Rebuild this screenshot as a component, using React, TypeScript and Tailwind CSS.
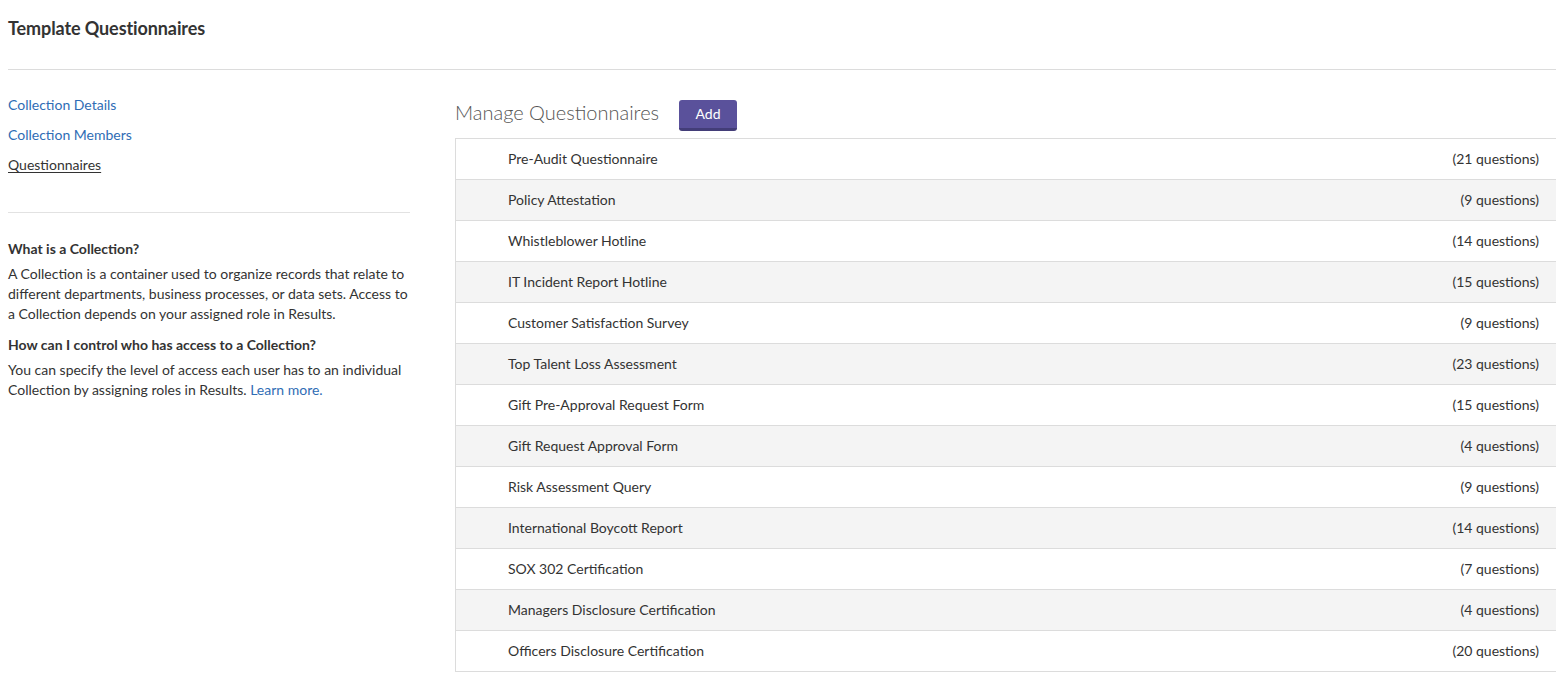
import React from "react";

const questionnaires: { name: string; count: number }[] = [
  { name: "Pre-Audit Questionnaire", count: 21 },
  { name: "Policy Attestation", count: 9 },
  { name: "Whistleblower Hotline", count: 14 },
  { name: "IT Incident Report Hotline", count: 15 },
  { name: "Customer Satisfaction Survey", count: 9 },
  { name: "Top Talent Loss Assessment", count: 23 },
  { name: "Gift Pre-Approval Request Form", count: 15 },
  { name: "Gift Request Approval Form", count: 4 },
  { name: "Risk Assessment Query", count: 9 },
  { name: "International Boycott Report", count: 14 },
  { name: "SOX 302 Certification", count: 7 },
  { name: "Managers Disclosure Certification", count: 4 },
  { name: "Officers Disclosure Certification", count: 20 },
];

function SideNav() {
  return (
    <nav className="flex flex-col gap-[10px] text-sm leading-5 pt-[25px]">
      <a href="#" className="text-[#2f6db5] w-fit">Collection Details</a>
      <a href="#" className="text-[#2f6db5] w-fit">Collection Members</a>
      <a href="#" className="text-[#333] underline underline-offset-2 w-fit">Questionnaires</a>
    </nav>
  );
}

function HelpText() {
  return (
    <div className="text-sm leading-5 text-[#333] pt-[26px]">
      <h3 className="font-bold mb-[5px]">What is a Collection?</h3>
      <p>
        A Collection is a container used to organize records that relate to different departments,
        business processes, or data sets. Access to a Collection depends on your assigned role in Results.
      </p>
      <h3 className="font-bold mt-[11px] mb-[5px]">How can I control who has access to a Collection?</h3>
      <p>
        You can specify the level of access each user has to an individual Collection by assigning roles in
        Results. <a href="#" className="text-[#2f6db5]">Learn more.</a>
      </p>
    </div>
  );
}

export default function App() {
  return (
    <div className="min-h-screen bg-white pl-2 pr-px text-[#333] font-['Lato','Noto_Sans',sans-serif]">
      {/* 헤더 */}
      <header className="h-[70px] border-b border-[#dcdcdc] flex items-center pb-[14px]">
        <h1 className="text-lg font-bold text-[#333] tracking-[-0.1px]">Template Questionnaires</h1>
      </header>

      <div className="flex">
        {/* 좌측 */}
        <aside className="w-[402px] shrink-0">
          <div className="h-[143px] border-b border-[#e2e2e2]">
            <SideNav />
          </div>
          <HelpText />
        </aside>

        {/* 우측 */}
        <main className="flex-1 ml-[45px] pt-[30px]">
          <div className="flex items-start gap-[20px] mb-[7px]">
            <h2 className="text-xl font-light text-[#555] leading-none mt-[2px]">Manage Questionnaires</h2>
            <button className="h-[31px] w-[58px] rounded-[3px] bg-[#5a519b] border-b-[3px] border-[#433d78] text-white text-sm leading-none">
              Add
            </button>
          </div>
          <ul className="border border-r-0 border-[#dcdcdc] text-sm text-[#333]">
            {questionnaires.map((q, i) => (
              <li
                key={q.name}
                className={`h-10 flex items-center justify-between pl-[52px] pr-[17px] ${
                  i > 0 ? "border-t border-[#dcdcdc] h-[41px]" : ""
                } ${i % 2 === 1 ? "bg-[#f4f4f4]" : "bg-white"}`}
              >
                <span>{q.name}</span>
                <span>({q.count} questions)</span>
              </li>
            ))}
          </ul>
        </main>
      </div>
    </div>
  );
}
